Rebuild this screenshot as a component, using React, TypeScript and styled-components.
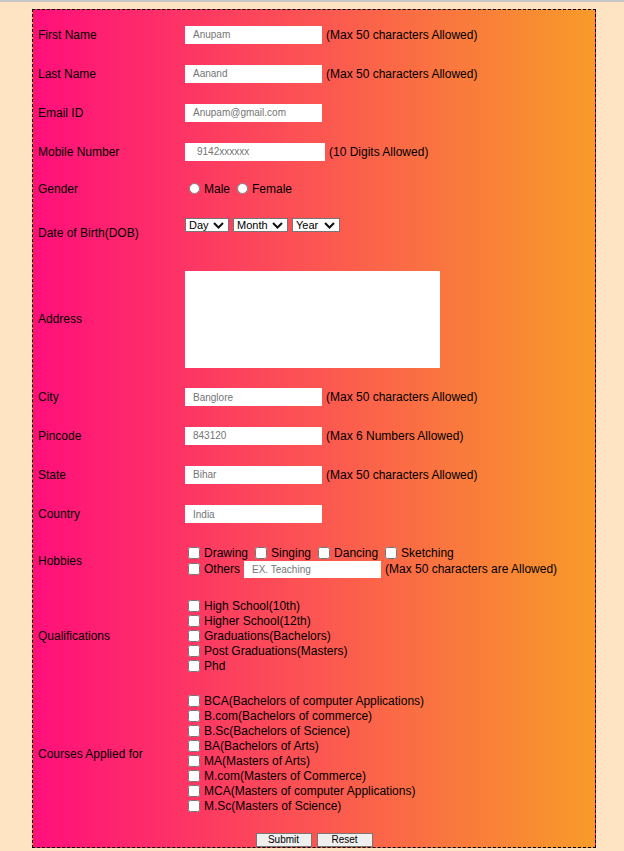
import styled, { createGlobalStyle } from "styled-components"

const GlobalStyle = createGlobalStyle`
  html, body {
    margin: 0;
    padding: 0;
    background: #ffe4c4;
    font-family: "Liberation Sans", Arial, sans-serif;
  }
`

const TopRule = styled.div`
  height: 2px;
  background: #c6c6c6;
`

const FormBox = styled.form`
  box-sizing: border-box;
  width: 564px;
  margin: 7px 0 0 32px;
  padding-top: 5px;
  border: 1px dashed #000;
  background: linear-gradient(to right, #ff0f7b, #f89b29);
  color: #000;
  font-size: 12px;
`

const Row = styled.div<{ $h: number }>`
  display: grid;
  grid-template-columns: 147px 1fr;
  align-items: center;
  height: ${(p) => p.$h}px;
  padding-left: 5px;
`

const Label = styled.label`
  font-size: 12px;
  white-space: nowrap;
`

const Field = styled.div<{ $top?: boolean }>`
  display: flex;
  align-items: center;
  align-self: ${(p) => (p.$top ? "start" : "center")};
  margin-top: ${(p) => (p.$top ? "12px" : "0")};
`

const TextInput = styled.input<{ $w?: number; $pad?: number }>`
  box-sizing: border-box;
  width: ${(p) => p.$w ?? 137}px;
  height: 18px;
  border: none;
  outline: none;
  padding: 0 0 0 ${(p) => p.$pad ?? 8}px;
  margin: 0;
  font-family: "Liberation Sans", Arial, sans-serif;
  font-size: 10px;
  background: #fff;
  &::placeholder {
    color: #757575;
  }
`

const Hint = styled.span`
  margin-left: 4px;
  white-space: nowrap;
`

const Radio = styled.input.attrs({ type: "radio" })`
  width: 11px;
  height: 11px;
  margin: 0 4px 0 4px;
`

const Choice = styled.label`
  display: inline-flex;
  align-items: center;
  margin-right: 3px;
`

const SelectWrap = styled.span`
  position: relative;
  display: inline-block;
  margin-right: 4px;
  height: 14px;
`

const Select = styled.select<{ $w: number }>`
  appearance: none;
  box-sizing: border-box;
  display: block;
  width: ${(p) => p.$w}px;
  height: 14px;
  margin: 0;
  padding: 0 0 0 3px;
  font-family: "Liberation Sans", Arial, sans-serif;
  font-size: 11px;
  line-height: 12px;
  border: 1px solid #767676;
  border-radius: 0;
  background: #fff;
  color: #000;
  outline: none;
`

const Chevron = styled.svg`
  position: absolute;
  right: 5px;
  top: 4px;
  width: 11px;
  height: 7px;
  pointer-events: none;
`

const Area = styled.textarea`
  box-sizing: border-box;
  width: 255px;
  height: 97px;
  border: none;
  outline: none;
  resize: none;
  margin: 0;
  background: #fff;
`

const Stack = styled.div`
  display: flex;
  flex-direction: column;
`

const Line = styled.div<{ $h?: number }>`
  display: flex;
  align-items: center;
  height: ${(p) => p.$h ?? 15}px;
  white-space: nowrap;
`

const Check = styled.input.attrs({ type: "checkbox" })`
  width: 12px;
  height: 12px;
  margin: 0 4px 0 3px;
`

const Gap = styled.span`
  display: inline-block;
  width: 4px;
`

const OtherInput = styled(TextInput)`
  width: 137px;
  height: 17px;
  margin-left: 4px;
`

const ButtonRow = styled.div`
  display: flex;
  justify-content: center;
  gap: 5px;
  padding-top: 10px;
`

const Button = styled.button`
  box-sizing: border-box;
  width: 56px;
  height: 14px;
  padding: 0;
  font-family: "Liberation Sans", Arial, sans-serif;
  font-size: 10px;
  line-height: 12px;
  color: #000;
  background: #efefef;
  border: 1px solid #767676;
  border-radius: 0;
`

const plainRows = [
  { label: "First Name", ph: "Anupam", hint: "(Max 50 characters Allowed)" },
  { label: "Last Name", ph: "Aanand", hint: "(Max 50 characters Allowed)" },
  { label: "Email ID", ph: "Anupam@gmail.com" },
]

const lowerRows = [
  { label: "City", ph: "Banglore", hint: "(Max 50 characters Allowed)", h: 38 },
  { label: "Pincode", ph: "843120", hint: "(Max 6 Numbers Allowed)", h: 39 },
  { label: "State", ph: "Bihar", hint: "(Max 50 characters Allowed)", h: 39 },
  { label: "Country", ph: "India", h: 40 },
]

const qualifications = [
  "High School(10th)",
  "Higher School(12th)",
  "Graduations(Bachelors)",
  "Post Graduations(Masters)",
  "Phd",
]

const courses = [
  "BCA(Bachelors of computer Applications)",
  "B.com(Bachelors of commerce)",
  "B.Sc(Bachelors of Science)",
  "BA(Bachelors of Arts)",
  "MA(Masters of Arts)",
  "M.com(Masters of Commerce)",
  "MCA(Masters of computer Applications)",
  "M.Sc(Masters of Science)",
]

const hobbies = ["Drawing", "Singing", "Dancing", "Sketching"]

const DropDown = ({ label, w }: { label: string; w: number }) => (
  <SelectWrap>
    <Select $w={w}>
      <option>{label}</option>
    </Select>
    <Chevron viewBox="0 0 11 7">
      <path d="M1 1 L5.5 5.5 L10 1" fill="none" stroke="#111" strokeWidth="2" />
    </Chevron>
  </SelectWrap>
)

export default function App() {
  return (
    <>
      <GlobalStyle />
      <TopRule />
      <FormBox onSubmit={(e) => e.preventDefault()}>
        {plainRows.map((r) => (
          <Row $h={39} key={r.label}>
            <Label>{r.label}</Label>
            <Field>
              <TextInput placeholder={r.ph} />
              {r.hint && <Hint>{r.hint}</Hint>}
            </Field>
          </Row>
        ))}
        <Row $h={39}>
          <Label>Mobile Number</Label>
          <Field>
            <TextInput placeholder="9142xxxxxx" $w={140} $pad={12} />
            <Hint>(10 Digits Allowed)</Hint>
          </Field>
        </Row>
        <Row $h={35}>
          <Label>Gender</Label>
          <Field>
            <Choice>
              <Radio name="gender" />
              Male
            </Choice>
            <Choice>
              <Radio name="gender" />
              Female
            </Choice>
          </Field>
        </Row>
        <Row $h={54}>
          <Label>Date of Birth(DOB)</Label>
          <Field $top>
            <DropDown label="Day" w={44} />
            <DropDown label="Month" w={55} />
            <DropDown label="Year" w={48} />
          </Field>
        </Row>
        <Row $h={118}>
          <Label>Address</Label>
          <Field>
            <Area />
          </Field>
        </Row>
        {lowerRows.map((r) => (
          <Row $h={r.h} key={r.label}>
            <Label>{r.label}</Label>
            <Field>
              <TextInput placeholder={r.ph} />
              {r.hint && <Hint>{r.hint}</Hint>}
            </Field>
          </Row>
        ))}
        <Row $h={54}>
          <Label>Hobbies</Label>
          <Stack>
            <Line $h={16}>
              {hobbies.map((h, i) => (
                <span key={h} style={{ display: "contents" }}>
                  {i > 0 && <Gap />}
                  <Check />
                  {h}
                </span>
              ))}
            </Line>
            <Line $h={17}>
              <Check />
              Others
              <OtherInput placeholder="EX. Teaching" />
              <Hint>(Max 50 characters are Allowed)</Hint>
            </Line>
          </Stack>
        </Row>
        <Row $h={96}>
          <Label>Qualifications</Label>
          <Stack>
            {qualifications.map((q) => (
              <Line key={q}>
                <Check />
                {q}
              </Line>
            ))}
          </Stack>
        </Row>
        <Row $h={139}>
          <Label>Courses Applied for</Label>
          <Stack>
            {courses.map((c) => (
              <Line key={c}>
                <Check />
                {c}
              </Line>
            ))}
          </Stack>
        </Row>
        <ButtonRow>
          <Button type="submit">Submit</Button>
          <Button type="reset">Reset</Button>
        </ButtonRow>
      </FormBox>
    </>
  )
}
